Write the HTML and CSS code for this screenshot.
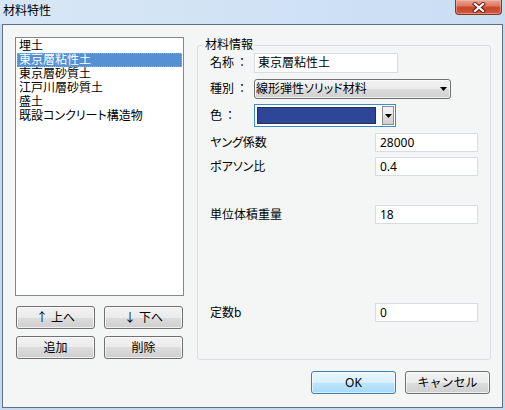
FILE: index.html
```html
<!DOCTYPE html>
<html lang="ja">
<head>
<meta charset="utf-8">
<title>材料特性</title>
<link rel="stylesheet" href="styles.css">
</head>
<body>
<div class="window">
  <div class="titlebar">
    <span class="title">材料特性</span>
    <div class="close-btn">
      <svg width="14" height="11" viewBox="0 0 14 11">
        <path d="M3 2L11 9M11 2L3 9" stroke="#5a1a10" stroke-width="4" stroke-linecap="square" fill="none"/>
        <path d="M3 2L11 9M11 2L3 9" stroke="#ffffff" stroke-width="2.2" stroke-linecap="square" fill="none"/>
      </svg>
    </div>
  </div>
  <div class="client">
    <div class="left-col">
      <ul class="listbox">
        <li>埋土</li>
        <li class="selected">東京層粘性土</li>
        <li>東京層砂質土</li>
        <li>江戸川層砂質土</li>
        <li>盛土</li>
        <li>既設コンクリート構造物</li>
      </ul>
      <div class="list-buttons">
        <button class="btn">↑ 上へ</button>
        <button class="btn">↓ 下へ</button>
        <button class="btn">追加</button>
        <button class="btn">削除</button>
      </div>
    </div>
    <div class="right-col">
      <fieldset class="group">
        <legend>材料情報</legend>
        <div class="group-body">
          <div class="row row-name">
            <span class="lbl short">名称<span class="colon">：</span></span>
            <div class="textbox name-box">東京層粘性土</div>
          </div>
          <div class="row row-kind">
            <span class="lbl short">種別<span class="colon">：</span></span>
            <div class="combo">
              <span class="combo-text">線形弾性ソリッド材料</span>
              <svg class="tri" width="7" height="4" viewBox="0 0 7 4"><path d="M0 0H7L3.5 4Z" fill="#000"/></svg>
            </div>
          </div>
          <div class="row row-color">
            <span class="lbl short">色<span class="colon">：</span></span>
            <div class="color-combo">
              <div class="swatch"></div>
              <div class="drop-btn">
                <svg width="7" height="4" viewBox="0 0 7 4"><path d="M0 0H7L3.5 4Z" fill="#000"/></svg>
              </div>
            </div>
          </div>
          <div class="row row-young">
            <span class="lbl long">ヤング係数</span>
            <div class="textbox num-box">28000</div>
          </div>
          <div class="row row-poisson">
            <span class="lbl long">ポアソン比</span>
            <div class="textbox num-box">0.4</div>
          </div>
          <div class="row row-weight">
            <span class="lbl long">単位体積重量</span>
            <div class="textbox num-box">18</div>
          </div>
          <div class="row row-const">
            <span class="lbl long">定数b</span>
            <div class="textbox num-box">0</div>
          </div>
        </div>
      </fieldset>
      <div class="dialog-buttons">
        <button class="btn btn-default">OK</button>
        <button class="btn">キャンセル</button>
      </div>
    </div>
  </div>
</div>
</body>
</html>
```
FILE: styles.css
```css
* {
  box-sizing: border-box;
}

html, body {
  margin: 0;
  padding: 0;
}

body {
  width: 505px;
  height: 410px;
  overflow: hidden;
  font-family: "Noto Sans", "Noto Sans CJK JP", sans-serif;
  font-size: 12px;
  line-height: 14px;
  color: #000;
  font-feature-settings: "palt";
}

.window {
  width: 505px;
  height: 410px;
  display: flex;
  flex-direction: column;
  background: #c5d9ef;
}

.titlebar {
  height: 24px;
  flex: none;
  display: flex;
  justify-content: space-between;
  align-items: flex-start;
  padding: 0 3px 0 3px;
  background: linear-gradient(to right, #d8e7f6 0%, #cfe1f4 60%, #c9ddf2 100%);
}

.title {
  padding-top: 4px;
  font-size: 12px;
  line-height: 14px;
}

.close-btn {
  width: 47px;
  height: 15px;
  display: flex;
  align-items: center;
  justify-content: center;
  border: 1px solid #8a3424;
  border-top: none;
  border-radius: 0 0 4px 4px;
  background: linear-gradient(to bottom, #e8a696 0%, #dc7a62 40%, #c8452b 55%, #d05a3e 100%);
  box-shadow: inset 0 0 0 1px rgba(255, 200, 190, 0.45);
}

.client {
  flex: 1;
  margin: 0 2px 2px;
  border: 1px solid #5f6f80;
  background: #f4f6f6;
  padding: 12px 0 0 12px;
  display: flex;
  gap: 13px;
}

.left-col {
  width: 169px;
  display: flex;
  flex-direction: column;
}

.listbox {
  list-style: none;
  margin: 0;
  padding: 1px;
  height: 259px;
  border: 1px solid #828790;
  background: #fff;
  font-family: "Liberation Sans", "Noto Sans CJK JP", sans-serif;
}

.listbox li {
  height: 14px;
  line-height: 14px;
  padding-left: 2px;
  white-space: nowrap;
}

.listbox li.selected {
  background: #5590d4;
  color: #fff;
  outline: 1px dotted #d99a5a;
  outline-offset: -1px;
}

.list-buttons {
  margin-top: 10px;
  padding-left: 1px;
  display: grid;
  grid-template-columns: 79px 79px;
  column-gap: 9px;
  row-gap: 7px;
}

.btn {
  height: 23px;
  margin: 0;
  padding: 0;
  font-family: inherit;
  font-size: 12px;
  line-height: 14px;
  color: #000;
  border: 1px solid #707070;
  border-radius: 3px;
  background: linear-gradient(to bottom, #f2f2f2 0%, #ebebeb 50%, #dddddd 50%, #cfcfcf 100%);
  box-shadow: inset 0 0 0 1px rgba(255, 255, 255, 0.7);
}

.btn-default {
  border-color: #3c7fb1;
  background: linear-gradient(to bottom, #eaf6fd 0%, #d9f0fc 50%, #bee6fd 50%, #a7d9f5 100%);
  box-shadow: inset 0 0 0 1px rgba(255, 255, 255, 0.6);
}

.right-col {
  width: 294px;
  display: flex;
  flex-direction: column;
}

.group {
  margin: 1px 0 0;
  padding: 0;
  min-width: 0;
  border: 1px solid #d5dfe5;
  border-radius: 3px;
}

.group legend {
  margin-left: 5px;
  padding: 0 2px;
  line-height: 14px;
}

.group-body {
  padding: 1px 12px 37px 12px;
  display: flex;
  flex-direction: column;
}

.row {
  display: flex;
  align-items: center;
}

.lbl {
  flex: none;
  white-space: nowrap;
}

.lbl.short {
  width: 44px;
}

.lbl.long {
  width: 165px;
}

.colon {
  font-feature-settings: normal;
  margin-left: 2px;
}

.textbox {
  height: 19px;
  padding: 0 4px;
  line-height: 17px;
  background: #fff;
  border: 1px solid #d8dde3;
  white-space: nowrap;
}

.name-box {
  width: 144px;
  height: 20px;
  line-height: 18px;
  padding-left: 3px;
}

.num-box {
  width: 103px;
}

.row-kind {
  margin-top: 6px;
}

.combo {
  width: 197px;
  height: 20px;
  display: flex;
  align-items: center;
  justify-content: space-between;
  padding: 0 3px 0 1px;
  border: 1px solid #707070;
  border-radius: 3px;
  background: linear-gradient(to bottom, #f2f2f2 0%, #ebebeb 50%, #dddddd 50%, #cfcfcf 100%);
  box-shadow: inset 0 0 0 1px rgba(255, 255, 255, 0.7);
}

.combo-text {
  white-space: nowrap;
}

.tri {
  display: block;
}

.row-color {
  margin-top: 5px;
}

.color-combo {
  width: 142px;
  height: 23px;
  display: flex;
  align-items: center;
  padding: 0 1px 0 2px;
  border: 1px solid #3c8ad0;
  background: #fff;
}

.swatch {
  width: 120px;
  height: 17px;
  background: #2e4698;
  border: 1px solid #2a2f48;
}

.drop-btn {
  margin-left: 6px;
  width: 12px;
  height: 19px;
  display: flex;
  align-items: center;
  justify-content: center;
  border: 1px solid #8c8c8c;
  background: linear-gradient(to bottom, #f2f2f2 0%, #ebebeb 50%, #dddddd 50%, #cfcfcf 100%);
}

.row-young {
  margin-top: 6px;
}

.row-poisson {
  margin-top: 5px;
}

.row-weight {
  margin-top: 29px;
}

.row-const {
  margin-top: 79px;
}

.dialog-buttons {
  margin-top: 11px;
  padding-right: 1px;
  display: flex;
  justify-content: flex-end;
  gap: 9px;
}

.dialog-buttons .btn {
  width: 85px;
}
```
